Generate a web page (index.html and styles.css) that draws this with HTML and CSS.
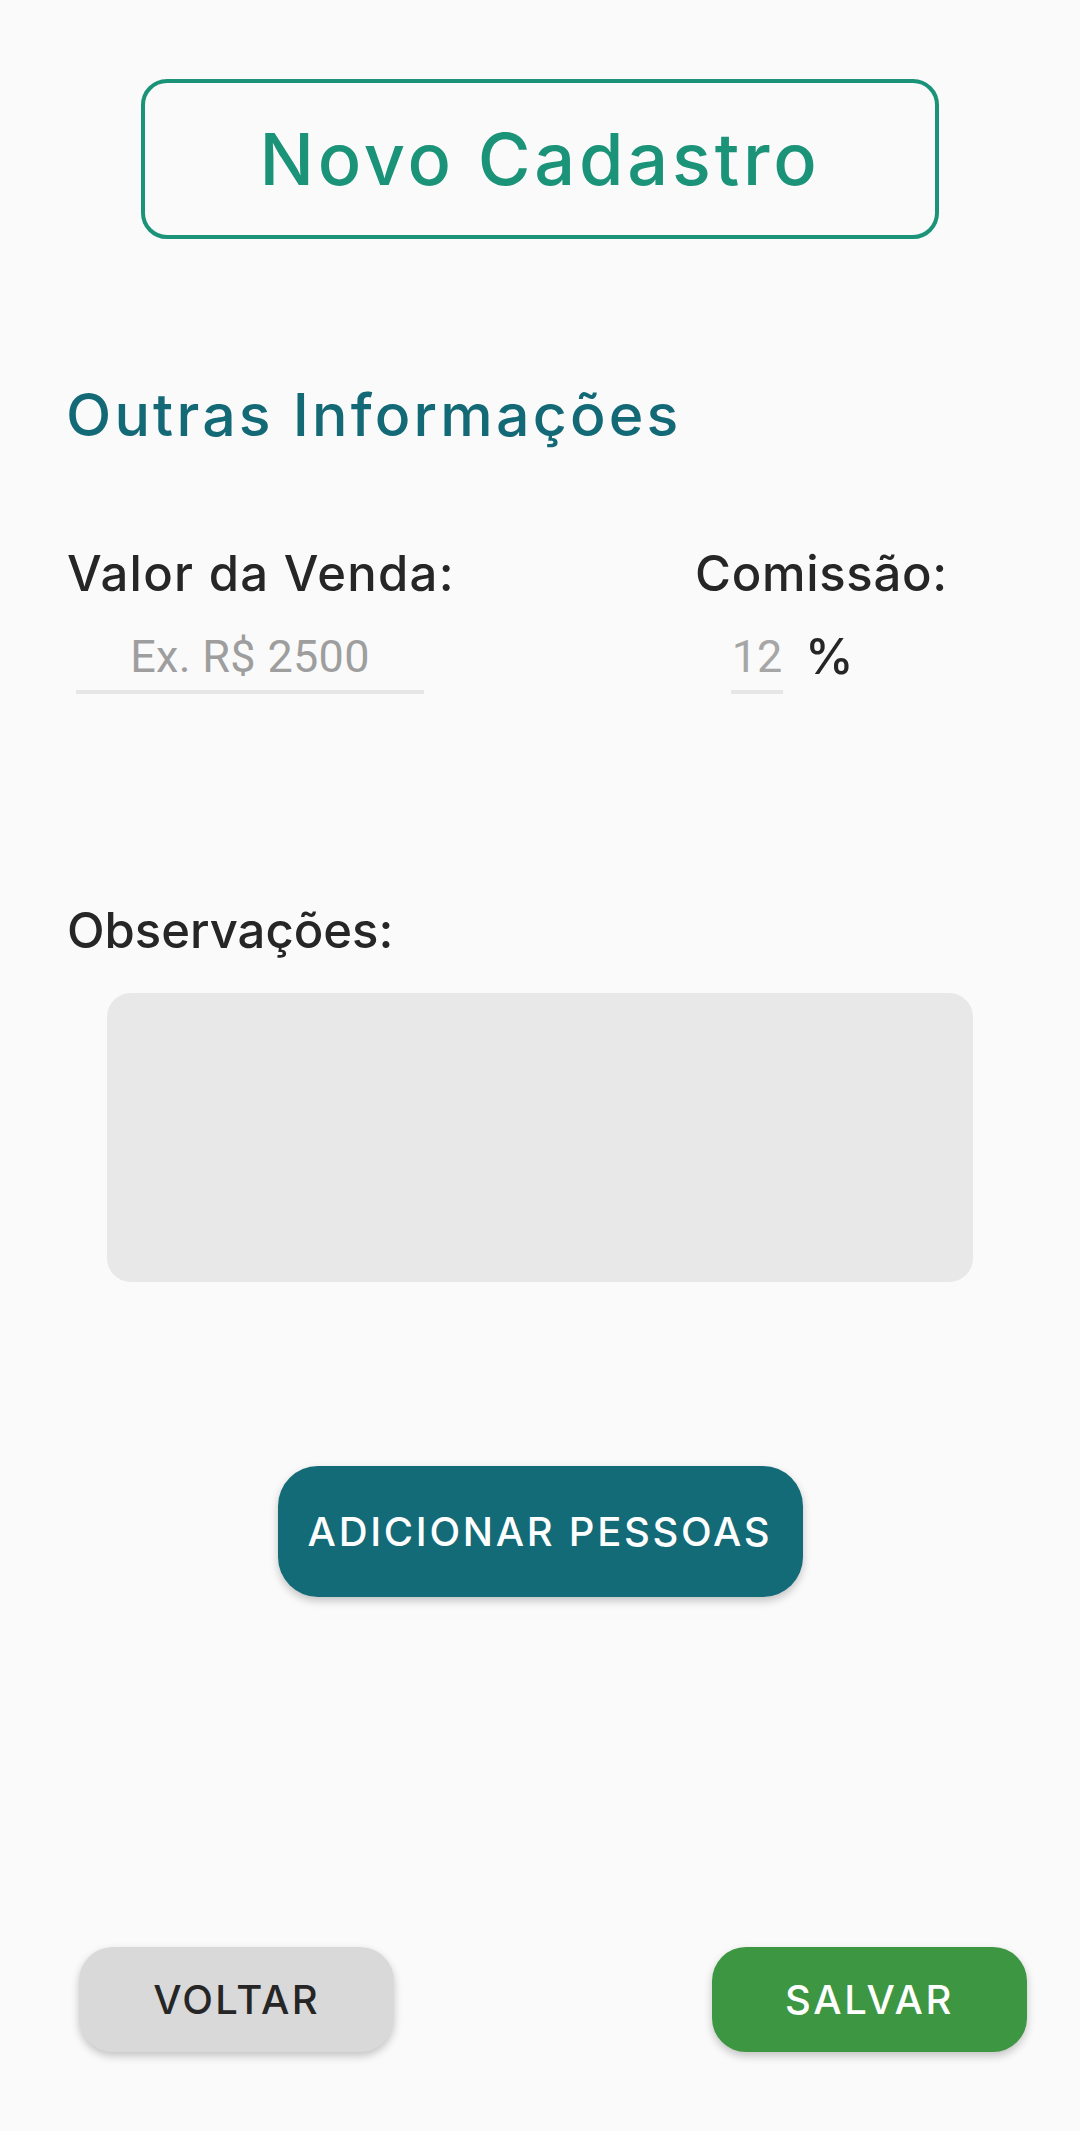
FILE: index.html
```html
<!DOCTYPE html>
<html lang="pt-BR">
<head>
<meta charset="utf-8">
<title>Novo Cadastro</title>
<link rel="stylesheet" href="styles.css">
</head>
<body>
<div class="screen">
  <header class="title-box"><h1 class="title">Novo Cadastro</h1></header>
  <h2 class="section">Outras Informações</h2>
  <div class="fields">
    <div class="field field-valor">
      <div class="label">Valor da Venda:</div>
      <div class="input input-wide">Ex. R$ 2500</div>
    </div>
    <div class="field field-comissao">
      <div class="label label-comissao">Comissão:</div>
      <div class="input-row">
        <div class="input input-narrow">12</div>
        <span class="pct">%</span>
      </div>
    </div>
  </div>
  <div class="obs">
    <div class="label obs-label">Observações:</div>
    <div class="textarea"></div>
  </div>
  <div class="add-wrap"><button class="btn-add">ADICIONAR PESSOAS</button></div>
  <div class="actions">
    <button class="btn btn-voltar">VOLTAR</button>
    <button class="btn btn-salvar">SALVAR</button>
  </div>
</div>
</body>
</html>
```
FILE: styles.css
```css
* { box-sizing: border-box; }
html, body { margin: 0; padding: 0; }
body {
  background: #fafafa;
  font-family: "Inter", "DejaVu Sans", sans-serif;
  color: #262626;
  width: 1080px;
  height: 2131px;
  overflow: hidden;
}
.screen { width: 1080px; }

.title-box {
  margin: 79px auto 0;
  width: 798px;
  height: 160px;
  border: 4px solid #1b9378;
  border-radius: 26px;
  display: flex;
  align-items: center;
  justify-content: center;
}
.title {
  margin: 0;
  font-size: 72px;
  line-height: 72px;
  font-weight: 500;
  color: #1b9378;
  letter-spacing: 3.8px;
}

.section {
  margin: 146px 0 0 66px;
  font-size: 59px;
  line-height: 59px;
  font-weight: 500;
  color: #136a76;
  letter-spacing: 3.2px;
}

.fields {
  margin-top: 105px;
  display: flex;
  padding-left: 67px;
}
.field-valor { width: 628px; }
.label {
  font-size: 49px;
  line-height: 49px;
  font-weight: 500;
  color: #262626;
  letter-spacing: 1.3px;
}
.label-comissao { letter-spacing: 0.7px; }
.input {
  margin-top: 36px;
  height: 60px;
  font-family: "Roboto", "Liberation Sans", sans-serif;
  font-size: 45px;
  line-height: 45px;
  color: #9e9e9e;
  text-align: center;
  border-bottom: 4px solid #e6e6e6;
}
.input-wide { margin-left: 9px; width: 348px; letter-spacing: 0.3px; }
.input-row { display: flex; align-items: flex-start; }
.input-narrow { margin-left: 36px; width: 52px; color: #a6a6a6; }
.pct {
  margin: 36px 0 0 22px;
  font-size: 49px;
  line-height: 45px;
  font-weight: 500;
  color: #262626;
}

.obs { margin-top: 212px; }
.obs-label { padding-left: 67px; letter-spacing: 0; }
.textarea {
  margin: 38px auto 0;
  width: 866px;
  height: 289px;
  background: #e8e8e8;
  border-radius: 24px;
}

.add-wrap { margin-top: 184px; display: flex; justify-content: center; }
.btn-add {
  width: 525px;
  height: 131px;
  border: none;
  border-radius: 40px;
  background: #136b77;
  color: #ffffff;
  font-family: "Inter", "DejaVu Sans", sans-serif;
  font-size: 40px;
  line-height: 40px;
  font-weight: 500;
  letter-spacing: 2.7px;
  box-shadow: 0 4px 8px rgba(0, 0, 0, 0.22);
  padding: 0;
}

.actions {
  margin-top: 350px;
  display: flex;
  justify-content: space-between;
  padding: 0 53px 0 79px;
}
.btn {
  width: 315px;
  height: 105px;
  border: none;
  border-radius: 34px;
  font-family: "Inter", "DejaVu Sans", sans-serif;
  font-size: 40px;
  line-height: 40px;
  font-weight: 500;
  letter-spacing: 2.2px;
  box-shadow: 0 4px 8px rgba(0, 0, 0, 0.22);
  padding: 0;
}
.btn-voltar { background: #d9d9d9; color: #262626; }
.btn-salvar { background: #3d9642; color: #ffffff; letter-spacing: 2.6px; }
```
